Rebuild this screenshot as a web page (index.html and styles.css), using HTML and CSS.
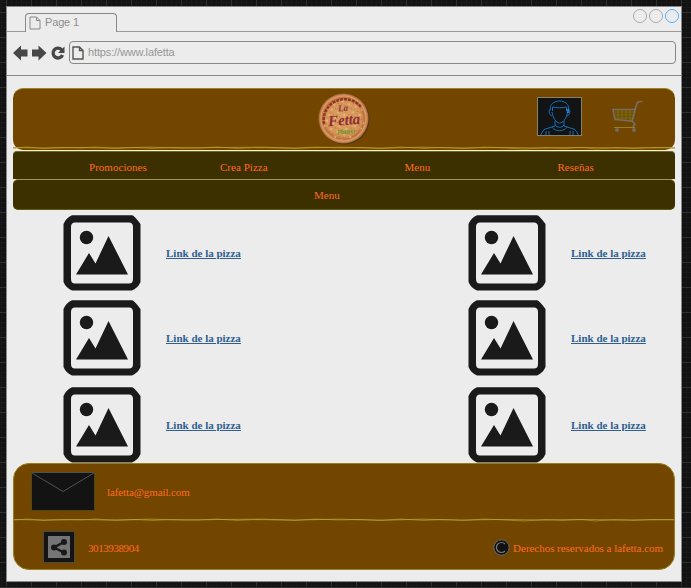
FILE: index.html
```html
<!DOCTYPE html>
<html lang="es">
<head>
<meta charset="utf-8">
<title>La Fetta</title>
<link rel="stylesheet" href="styles.css">
</head>
<body>
<svg class="defs" width="0" height="0">
  <symbol id="picture" viewBox="0 0 78 76">
    <path d="M9 .3H69Q71 .3 77.500 9V67Q75 73 69 75.500H9Q3 73 .5 67V9Q3 3 9 .3zM12 7.500Q8 7.500 8 12V64Q8 68.500 12 68.500H66Q70 68.500 70 64V12Q70 7.500 66 7.500z" fill="#1a1a1a" fill-rule="evenodd"/>
    <circle cx="23.500" cy="22.500" r="6.700" fill="#1a1a1a"/>
    <path d="M13 59.500L26 38l6.500 10.500L45.500 21 65 59.500z" fill="#1a1a1a"/>
  </symbol>
  <symbol id="page" viewBox="0 0 12 14">
    <path d="M1 1h6.500L11 4.500V13H1zM7.500 1v3.500H11" fill="none" stroke="currentColor"/>
  </symbol>
  <symbol id="wave" viewBox="0 0 662 4" preserveAspectRatio="none">
    <path d="M0 2L14 1 30 2.500 48 1.500 66 2 82 1 103 2.500 122 1.500 139 2.500 160 1.500 185 2 203 1 224 2.500 244 1.500 263 2 282 2.500 302 1 326 2 349 1.500 365 2.500 387 1 411 2.500 430 1.500 452 2.500 472 1 492 2 512 3 533 1.500 551 2.500 569 1.500 583 3 603 1.500 622 2.500 642 1.500 662 2" fill="none" stroke="#948000" stroke-width="1.100"/>
    <path d="M0 1.500L30 2 62 1.500 97 2 137 1.200 172 2 207 1.500 249 1.200 282 2 327 1.200 372 2.200 409 1.200 447 2 487 1.500 527 2 567 1.500 607 2 662 1.500" fill="none" stroke="#c3a94d" stroke-width=".7"/>
  </symbol>
</svg>
<div class="window">
  <div class="tabbar">
    <div class="tab"><svg class="tab-icon"><use href="#page"/></svg><span>Page 1</span></div>
    <div class="controls"><i></i><i></i><i class="active"></i></div>
  </div>
  <div class="toolbar">
    <svg class="arrows" width="53" height="18" viewBox="0 0 53 18">
      <path d="M0 9L8 1.500V5.500H14.500v7H8v4z M33.500 9L25.500 1.500V5.500H19v7h6.500v4z" fill="#474747"/>
      <path d="M48.700 5.900A4.900 4.900 0 1 0 49.500 11" fill="none" stroke="#474747" stroke-width="3.300"/>
      <path d="M51.500 2.500V9H45z" fill="#474747"/>
    </svg>
    <div class="address"><svg class="address-icon"><use href="#page"/></svg><span>https://www.lafetta</span></div>
  </div>
  <div class="page">
    <header class="banner">
      <svg class="logo" width="52" height="52" viewBox="0 0 52 52">
        <defs>
          <radialGradient id="crust"><stop offset="0" stop-color="#dca565"/><stop offset=".73" stop-color="#d39457"/><stop offset=".83" stop-color="#bd6b3c"/><stop offset=".9" stop-color="#dba062"/><stop offset="1" stop-color="#a3603a"/></radialGradient>
          <pattern id="topping" width="7" height="6" patternUnits="userSpaceOnUse" patternTransform="rotate(23)"><circle cx="1.500" cy="1.500" r=".8" fill="#c76a3c"/><circle cx="5" cy="4" r="1" fill="#e6bd80"/><circle cx="5" cy="1" r=".5" fill="#b75435"/></pattern>
        </defs>
        <circle cx="26.500" cy="26.500" r="25" fill="#573719"/>
        <circle cx="25.500" cy="25.500" r="25" fill="url(#crust)"/>
        <circle cx="25.500" cy="25.500" r="21" fill="url(#topping)"/>
        <path d="M6 31A21 21 0 0 1 43 14" fill="none" stroke="#923425" stroke-width="2.500" stroke-dasharray="3 1"/>
        <g class="logo-text" transform="rotate(-5 26 26)">
          <text x="21" y="18" font-size="9">La</text>
          <text x="10" y="32" font-size="15" textLength="32">Fetta</text>
          <text class="green" x="18" y="41" font-size="7" textLength="18">Pizzeria</text>
        </g>
      </svg>
      <svg class="user" width="45" height="39" viewBox="0 0 45 39">
        <rect x=".5" y=".5" width="44" height="38" fill="#111315" stroke="#87806c"/>
        <g fill="none" stroke="#176fb5">
          <path d="M15 15C16 21 19 26 22.500 26S29.500 22 30.500 15M15.500 14V10c4 1 10 1 14 0v4M13.500 13C11 1 34 1 31.500 13M13.500 12c-2 0-2 6 1.500 7M31.500 12c2 0 2 6-1.500 7"/>
          <path d="M18 24v5L7 32.500 3.500 38M27 24v5l11 3.500L41.500 38M15 30c3 5 12 5 15 0M18 28c2 3 7 3 9 0M9 34v4M36 34v4M12 34v4M33 34v4"/>
        </g>
        <path d="M31 12v4" stroke="#249dff" stroke-width="1.500"/>
      </svg>
      <svg class="cart" width="31" height="33" viewBox="0 0 31 33">
        <path d="M3 12h21M3 15h20M3 18h19M6 9v11M10 9v11M14 9v11M18 9v11" stroke="#777613" stroke-width=".8"/>
        <g fill="none" stroke="#736d63" stroke-width="1.700"><path d="M30.500 1.500H27L25 3l-5 18L3 19.500 1 9.500h22.500M20 21l3 3-2 3"/></g>
        <path d="M2 27.500h21" stroke="#918321"/>
        <circle cx="5" cy="30" r="2" fill="#706a64"/><circle cx="22" cy="30" r="2" fill="#706a64"/>
      </svg>
      <svg class="edge banner-edge"><use href="#wave"/></svg>
    </header>
    <nav class="nav">
      <span>Promociones</span><span>Crea Pizza</span><span>Menu</span><span>Reseñas</span>
    </nav>
    <div class="heading"><span>Menu</span></div>
    <main class="gallery">
      <div class="item"><svg class="picture"><use href="#picture"/></svg><a>Link de la pizza</a></div>
      <div class="item"><svg class="picture"><use href="#picture"/></svg><a>Link de la pizza</a></div>
      <div class="item"><svg class="picture"><use href="#picture"/></svg><a>Link de la pizza</a></div>
      <div class="item"><svg class="picture"><use href="#picture"/></svg><a>Link de la pizza</a></div>
      <div class="item"><svg class="picture"><use href="#picture"/></svg><a>Link de la pizza</a></div>
      <div class="item"><svg class="picture"><use href="#picture"/></svg><a>Link de la pizza</a></div>
    </main>
    <footer class="footer">
      <div class="contact">
        <svg width="64" height="39" viewBox="0 0 64 39"><rect x=".5" y=".5" width="63" height="38" fill="#131313" stroke="#4d4a18"/><path d="M.5 .5h63M1 1l31 18.500L63 1" fill="none" stroke="#505050"/></svg>
        <span class="mail">lafetta@gmail.com</span>
      </div>
      <div class="legal">
        <svg width="32" height="32" viewBox="0 0 32 32"><rect x=".5" y=".5" width="31" height="31" fill="#141414" stroke="#4a4c42"/><rect x="5" y="5" width="22" height="22" fill="#757575"/><path d="M21 11L11 16.500 21 21.500" fill="none" stroke="#191919" stroke-width="2.500"/><g fill="#191919"><circle cx="21" cy="11" r="3"/><circle cx="11" cy="16.500" r="3"/><circle cx="21" cy="21.500" r="3"/></g></svg>
        <span class="phone">3013938904</span>
        <svg class="copy" width="17" height="17" viewBox="0 0 17 17"><circle cx="8.500" cy="8.500" r="7.700" fill="#111" stroke="#6e6c66"/><path d="M12 5A5 5 0 1 0 12 12" fill="none" stroke="#777" stroke-width="1.200"/></svg>
        <span class="rights">Derechos reservados a lafetta.com</span>
        <svg class="edge divider"><use href="#wave"/></svg>
      </div>
    </footer>
  </div>
</div>
</body>
</html>
```
FILE: styles.css
```css
* { box-sizing: border-box; }
body {
  margin: 0;
  padding: 6px 8px 5px 6px;
  height: 588px;
  overflow: hidden;
  background-color: #121212;
  background-image:
    linear-gradient(#303030 1px, transparent 1px),
    linear-gradient(90deg, #303030 1px, transparent 1px),
    linear-gradient(#191919 1px, transparent 1px),
    linear-gradient(90deg, #191919 1px, transparent 1px);
  background-size: 25px 25px, 25px 25px, 5px 5px, 5px 5px;
  background-position: 0 12px, 6px 0, 0 2px, 1px 0;
  font-family: "Liberation Serif", serif;
  font-size: 11px;
  line-height: 14px;
  color: #ff6b20;
}
svg { display: block; flex: none; }
span, a { white-space: nowrap; }
.defs { position: absolute; }
.window {
  width: 676px;
  height: 576px;
  background: #ececec;
  border: 1px solid #888;
}
.tabbar {
  display: flex;
  justify-content: space-between;
  height: 25px;
  padding: 6px 2px 0 18px;
  box-shadow: inset 0 -1px #999;
  font: 11px/16px "Liberation Sans", sans-serif;
  color: #8d8d8d;
}
.tab {
  display: flex;
  gap: 4px;
  width: 92px;
  height: 19px;
  padding: 0 3px;
  background: #ececec;
  border: 1px solid #888;
  border-bottom: 0;
  border-radius: 4px 4px 0 0;
}
.tab span { letter-spacing: -.15px; }
.tab-icon { width: 12px; height: 14px; margin-top: 2px; color: #888; }
.controls { display: flex; gap: 2px; margin: -4px 0 0 0; }
.controls i { width: 14px; height: 14px; border: 1px solid #aaa; border-radius: 50%; }
.controls .active { border-color: #54b1ff; }
.toolbar {
  display: flex;
  height: 44px;
  padding: 9px 6px 0;
  border-bottom: 1px solid #888;
}
.arrows { margin-top: 3px; }
.address {
  display: flex;
  flex: 1;
  gap: 4px;
  height: 23px;
  margin: 0 -1px 0 3px;
  padding: 2px;
  border: 1px solid #888;
  border-radius: 4px;
  font: 11px/16px "Liberation Sans", sans-serif;
  color: #969696;
}
.address span { letter-spacing: -.14px; }
.address-icon { width: 12px; height: 14px; margin-top: 2px; color: #555; stroke-width: 1.4; }
.page { padding: 12px 6px 0; }
.banner {
  position: relative;
  display: flex;
  height: 62px;
  padding: 4px 0 0 305px;
  background: #734600;
  border-top: 1px solid #9c861c;
  border-radius: 10px;
}
.logo-text { fill: #922b32; font-weight: bold; font-style: italic; }
.logo-text .green { fill: #6f982d; }
.user { margin: 4px 0 0 167px; }
.cart { margin: 7px 0 0 30px; }
.edge { position: absolute; left: 0; width: 100%; height: 4px; }
.banner-edge { bottom: 0; }
.nav {
  display: grid;
  grid-template-columns: 131px 184.5px 153px auto;
  height: 28px;
  padding: 8px 0 0 76px;
  background: #3c3000;
  border-top: 1px solid #756a08;
  border-radius: 4px 4px 0 0;
  box-shadow: 0 -1px #eee;
  margin-top: 1px;
  letter-spacing: .03px;
}
.heading {
  height: 31px;
  padding: 8px 0 0 301px;
  background: #3c3000;
  border-top: 1px solid #a29745;
  border-bottom: 1px solid #665900;
  border-radius: 5px;
}
.gallery {
  display: grid;
  grid-template-columns: 405px auto;
  grid-template-rows: 85px 87px 76px;
  padding: 5px 0 0 50px;
}
.item { display: flex; gap: 25px; height: 76px; }
.picture { width: 78px; height: 76px; }
.item a {
  margin-top: 31px;
  font-weight: bold;
  color: #2f5f8f;
  text-decoration: underline;
  text-underline-offset: 1px;
}
.footer {
  height: 107px;
  background: #734600;
  border: 1px solid #978019;
  border-radius: 16px;
}
.contact { display: flex; height: 55px; padding: 8px 0 0 17px; }
.mail { margin: 13px 0 0 12px; letter-spacing: -.1px; }
.legal { position: relative; display: flex; height: 50px; padding: 12px 11px 0 29px; }
.phone { margin: 10px 0 0 13px; letter-spacing: -.42px; }
.copy { margin: 8px 0 0 auto; }
.rights { margin: 10px 0 0 3px; letter-spacing: -.03px; }
.divider { top: -1px; }
```
